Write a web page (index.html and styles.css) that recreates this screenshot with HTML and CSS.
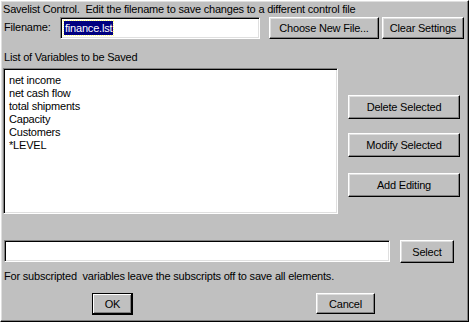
FILE: index.html
```html
<!DOCTYPE html>
<html lang="en">
<head>
    <meta charset="UTF-8">
    <title>Savelist Control</title>
    <link rel="stylesheet" href="styles.css">
</head>
<body>
    <div class="window">
        <div class="title">Savelist Control.&nbsp; Edit the filename to save changes to a different control file</div>
        <div class="file-row">
            <label class="file-label">Filename:</label>
            <div class="field file-field"><span class="selected">finance.lst</span></div>
            <button class="btn choose">Choose New File...</button>
            <button class="btn clear">Clear Settings</button>
        </div>
        <div class="list-label">List of Variables to be Saved</div>
        <div class="main">
            <div class="field listbox">
                <div>net income</div>
                <div>net cash flow</div>
                <div>total shipments</div>
                <div>Capacity</div>
                <div>Customers</div>
                <div>*LEVEL</div>
            </div>
            <div class="side">
                <button class="btn side-btn">Delete Selected</button>
                <button class="btn side-btn modify">Modify Selected</button>
                <button class="btn side-btn add">Add Editing</button>
            </div>
        </div>
        <div class="select-row">
            <div class="field select-field"></div>
            <button class="btn select">Select</button>
        </div>
        <div class="note">For subscripted&nbsp; variables leave the subscripts off to save all elements.</div>
        <div class="actions">
            <button class="btn ok">OK</button>
            <button class="btn cancel">Cancel</button>
        </div>
    </div>
</body>
</html>
```

FILE: styles.css
```css
body {
    margin: 0;
    background-color: #c0c0c0;
    font-family: "Liberation Sans", Arial, sans-serif;
    font-size: 11px;
    letter-spacing: -0.2px;
    color: #000;
}
.window {
    width: 469px;
    height: 322px;
    box-sizing: border-box;
    background-color: #c0c0c0;
    border: 1px solid;
    border-color: #ffffff #000000 #000000 #ffffff;
    box-shadow: inset -1px -1px #808080, inset 1px 1px #dfdfdf;
    padding: 0 0 0 2px;
}
.title {
    height: 16px;
    line-height: 15px;
    padding-top: 1px;
    box-sizing: border-box;
    white-space: nowrap;
}
.file-row {
    display: flex;
    align-items: flex-start;
    height: 22px;
}
.file-label {
    width: 56px;
    margin-left: 1px;
    line-height: 20px;
}
.field {
    box-sizing: border-box;
    background-color: #fff;
    border: 1px solid;
    border-color: #808080 #ffffff #ffffff #808080;
    box-shadow: inset 1px 1px #000, inset -1px -1px #dfdfdf;
}
.file-field {
    width: 200px;
    height: 22px;
    padding: 3px 0 0 3px;
}
.selected {
    display: inline-block;
    background-color: #000080;
    color: #fff;
    line-height: 14px;
    padding: 0 1px;
    outline: 1px dotted #ffff80;
}
.btn {
    box-sizing: border-box;
    font-family: inherit;
    font-size: 11px;
    letter-spacing: -0.2px;
    color: #000;
    background-color: #c0c0c0;
    border: 1px solid;
    border-color: #ffffff #000000 #000000 #ffffff;
    box-shadow: inset -1px -1px #808080, inset 1px 1px #dfdfdf;
    padding: 0;
    margin: 0;
}
.choose {
    width: 110px;
    height: 22px;
    margin-left: 9px;
}
.clear {
    width: 82px;
    height: 22px;
    margin-left: 3px;
}
.list-label {
    height: 29px;
    line-height: 13px;
    padding-top: 12px;
    box-sizing: border-box;
    margin-left: 1px;
}
.main {
    display: flex;
    height: 146px;
}
.listbox {
    width: 335px;
    height: 146px;
    padding: 5px 0 0 5px;
    line-height: 13px;
}
.side {
    display: flex;
    flex-direction: column;
    margin-left: 10px;
    padding-top: 27px;
}
.side-btn {
    width: 112px;
    height: 24px;
}
.modify {
    margin-top: 14px;
}
.add {
    margin-top: 16px;
}
.select-row {
    display: flex;
    margin-top: 26px;
    margin-left: 1px;
}
.select-field {
    width: 386px;
    height: 22px;
}
.select {
    width: 54px;
    height: 23px;
    margin-left: 10px;
}
.note {
    height: 30px;
    line-height: 13px;
    padding-top: 7px;
    box-sizing: border-box;
    margin-left: 1px;
}
.actions {
    display: flex;
}
.ok {
    width: 41px;
    height: 22px;
    margin-left: 89px;
    border-color: #000;
    box-shadow: inset -1px -1px #000, inset 1px 1px #fff, inset -2px -2px #808080;
}
.cancel {
    width: 59px;
    height: 21px;
    margin-left: 183px;
}
```
